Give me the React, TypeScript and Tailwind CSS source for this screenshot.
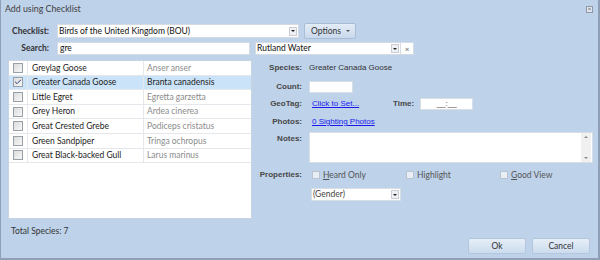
import { Check } from "lucide-react";

const birds = [
  { name: "Greylag Goose", sci: "Anser anser" },
  { name: "Greater Canada Goose", sci: "Branta canadensis", checked: true },
  { name: "Little Egret", sci: "Egretta garzetta" },
  { name: "Grey Heron", sci: "Ardea cinerea" },
  { name: "Great Crested Grebe", sci: "Podiceps cristatus" },
  { name: "Green Sandpiper", sci: "Tringa ochropus" },
  { name: "Great Black-backed Gull", sci: "Larus marinus" },
];

function DropArrow() {
  return (
    <span className="flex items-center justify-center w-[8px] h-[9px] bg-[#eef0f3] border border-[#c9ced6]">
      <span className="w-0 h-0 border-l-[2px] border-r-[2px] border-t-[2px] border-l-transparent border-r-transparent border-t-[#222]" />
    </span>
  );
}

function Box({ checked, faint }: { checked?: boolean; faint?: boolean }) {
  return (
    <span
      className={
        faint
          ? "flex w-[8px] h-[8px] border border-[#b8c4d2] bg-[#e9eef5]"
          : "flex items-center justify-center w-[10px] h-[10px] border border-[#9aa0a8] bg-gradient-to-br from-[#dcdcdc] to-[#f7f7f7]"
      }
    >
      {checked && <Check size={8} strokeWidth={3} className="text-[#2a3f7a]" />}
    </span>
  );
}

export default function App() {
  const seg = { fontFamily: "Lato, 'Liberation Sans', sans-serif" };
  const ms = { fontFamily: "'Liberation Sans', Arial, sans-serif" };

  return (
    <div className="w-[600px] h-[260px] bg-[#bed2ea] border-l border-r-2 border-b-2 border-l-[#8e9fb6] border-r-[#8e9fb6] border-b-[#8e9fb6] flex flex-col text-[8.5px] leading-none text-[#222]" style={seg}>
      {/* Title bar */}
      <div className="h-[18px] flex items-center justify-between pl-[4px] pr-[5px]">
        <span className="text-[#3e3e3e] text-[8.8px]">Add using Checklist</span>
        <span className="w-[7px] h-[7px] border border-[#8f98a4] bg-[#dfe5ec] flex items-center justify-center text-[6px] text-[#555]">×</span>
      </div>

      {/* Checklist row */}
      <div className="mt-[6px] h-[14px] flex items-center">
        <span className="w-[48px] text-right font-bold text-[#333]">Checklist:</span>
        <div className="ml-[8px] w-[242px] h-[14px] bg-white border border-[#d4dbe4] flex items-center justify-between pl-[1px] pr-[1px]">
          <span className="text-[#111]">Birds of the United Kingdom (BOU)</span>
          <DropArrow />
        </div>
        <div className="ml-[5px] w-[52px] h-[16px] rounded-[2px] border border-[#a9bdd5] bg-gradient-to-b from-[#e3ecf7] to-[#c9d9ec] flex items-center justify-between pl-[6px] pr-[5px] text-[#333]">
          <span>Options</span>
          <span className="w-0 h-0 border-l-[2px] border-r-[2px] border-t-[2px] border-l-transparent border-r-transparent border-t-[#555]" />
        </div>
      </div>

      {/* Search row */}
      <div className="mt-[4px] h-[13px] flex items-center">
        <span className="w-[48px] text-right font-bold text-[#333]">Search:</span>
        <div className="ml-[8px] w-[193px] h-[13px] bg-white border border-[#d4dbe4] flex items-center pl-[2px] text-[#111]">gre</div>
        <div className="ml-[5px] w-[146px] h-[13px] bg-white border border-[#d4dbe4] flex items-center justify-between pl-[1px] pr-[1px] text-[#111]">
          <span>Rutland Water</span>
          <DropArrow />
        </div>
        <div className="w-[13px] h-[13px] bg-white border border-[#d4dbe4] border-l-0 flex items-center justify-center text-[8px] text-[#666]">×</div>
      </div>

      {/* Main area */}
      <div className="mt-[5px] flex-1 flex">
        {/* Left column */}
        <div className="ml-[7px] w-[244px] flex flex-col">
          <div className="h-[159px] bg-white border border-[#c9d4e2] flex flex-col">
            {birds.map((b) => (
              <div
                key={b.name}
                className={
                  "h-[14.6px] flex items-stretch border-b border-[#e4e7eb] " +
                  (b.checked ? "bg-[#cbe3f8]" : "")
                }
              >
                <div className="w-[19px] flex items-center justify-center border-r border-[#e4e7eb]">
                  <Box checked={b.checked} />
                </div>
                <div className="w-[116px] flex items-center pl-[4px] border-r border-[#e4e7eb] text-[#1c1c1c]">{b.name}</div>
                <div className={"flex-1 flex items-center pl-[3px] " + (b.checked ? "text-[#1c1c1c]" : "text-[#8c8c8c]")}>{b.sci}</div>
              </div>
            ))}
          </div>
          <div className="mt-[8px] pl-[3px] text-[#333]">Total Species: 7</div>
        </div>

        {/* Right column */}
        <div className="flex-1 flex flex-col text-[8px]" style={ms}>
          <div className="mt-[2px] h-[12px] flex items-center">
            <span className="w-[50px] text-right font-bold text-[#474747]">Species:</span>
            <span className="ml-[7px] text-[#333]">Greater Canada Goose</span>
          </div>
          <div className="mt-[7px] h-[12px] flex items-center">
            <span className="w-[50px] text-right font-bold text-[#474747]">Count:</span>
            <span className="ml-[7px] w-[44px] h-[12px] bg-white border border-[#d8dee6]" />
          </div>
          <div className="mt-[5px] h-[12px] flex items-center">
            <span className="w-[50px] text-right font-bold text-[#474747]">GeoTag:</span>
            <span className="ml-[10px] w-[81px] text-[#1a1aee] underline">Click to Set...</span>
            <span className="font-bold text-[#474747]">Time:</span>
            <span className="ml-[6px] w-[53px] h-[12px] bg-white border border-[#d8dee6] flex items-center justify-center text-[#333]">__:__</span>
          </div>
          <div className="mt-[6px] h-[12px] flex items-center">
            <span className="w-[50px] text-right font-bold text-[#474747]">Photos:</span>
            <span className="ml-[10px] text-[#1a1aee] underline">0 Sighting Photos</span>
          </div>
          <div className="mt-[4px] h-[31px] flex items-start">
            <span className="w-[50px] mt-[3px] text-right font-bold text-[#474747]">Notes:</span>
            <div className="ml-[7px] w-[284px] h-[31px] bg-white border border-[#d8dee6] flex justify-end">
              <div className="w-[10px] mr-[1px] bg-[#f0f0f0] flex flex-col justify-between items-center py-[3px]">
                <span className="w-0 h-0 border-l-[2px] border-r-[2px] border-b-[2px] border-l-transparent border-r-transparent border-b-[#888]" />
                <span className="w-0 h-0 border-l-[2px] border-r-[2px] border-t-[2px] border-l-transparent border-r-transparent border-t-[#888]" />
              </div>
            </div>
          </div>
          <div className="mt-[6px] h-[12px] flex items-center">
            <span className="w-[50px] text-right font-bold text-[#474747]">Properties:</span>
            <div className="ml-[10px] flex" style={seg}>
              <span className="w-[94px] flex items-center gap-[3px] text-[#555] text-[8.5px]">
                <Box faint /> <span><u>H</u>eard Only</span>
              </span>
              <span className="w-[94px] flex items-center gap-[3px] text-[#555] text-[8.5px]">
                <Box faint /> <span>Hi<u>g</u>hlight</span>
              </span>
              <span className="flex items-center gap-[3px] text-[#555] text-[8.5px]">
                <Box faint /> <span><u>G</u>ood View</span>
              </span>
            </div>
          </div>
          <div className="mt-[7px] h-[13px] flex items-center">
            <div className="ml-[59px] w-[90px] h-[13px] bg-white border border-[#d8dee6] flex items-center justify-between pl-[1px] pr-[1px] text-[#444] text-[8.5px]" style={seg}>
              <span>(Gender)</span>
              <DropArrow />
            </div>
          </div>

          <div className="mt-auto mb-[4px] mr-[8px] flex justify-end gap-[6px] text-[#333] text-[8.5px]" style={seg}>
            <button className="w-[58px] h-[16px] rounded-[2px] border border-[#b4c6dc] bg-gradient-to-b from-[#e6eef8] to-[#ccdcee]">Ok</button>
            <button className="w-[58px] h-[16px] rounded-[2px] border border-[#b4c6dc] bg-gradient-to-b from-[#e6eef8] to-[#ccdcee]">Cancel</button>
          </div>
        </div>
      </div>
    </div>
  );
}
